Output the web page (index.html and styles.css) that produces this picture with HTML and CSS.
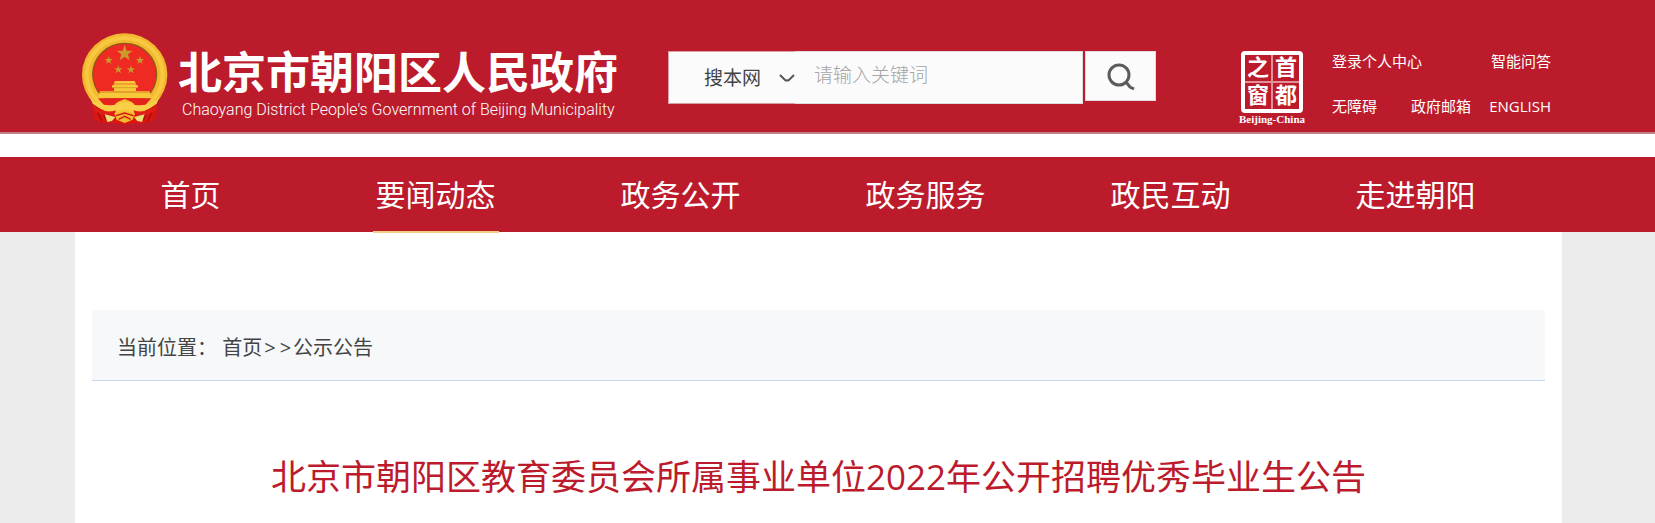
FILE: index.html
```
<!DOCTYPE html>
<html lang="zh-CN">
<head>
	<meta charset="UTF-8">
	<title>北京市朝阳区教育委员会所属事业单位2022年公开招聘优秀毕业生公告</title>
	<link rel="stylesheet" href="styles.css">
</head>
<body>
	<header class="header">
		<a class="logo" href="#">
			<svg class="emblem" viewBox="38 40 258 276" aria-hidden="true">
				<path d="M72 232 L70 292 Q82 310 110 309 L166 314 L222 310 Q250 312 262 290 L262 232 Z" fill="#d9160f"/>
				<path d="M80 256 Q84 282 98 304 M94 262 L110 300 M252 256 Q248 282 236 304 M238 262 L222 300" stroke="#9c0f14" stroke-width="4" fill="none"/>
				<ellipse cx="166" cy="165" rx="128" ry="124" fill="#f2b92e"/>
				<ellipse cx="166" cy="165" rx="114" ry="110" fill="none" stroke="#f8c840" stroke-width="12"/>
				<ellipse cx="166" cy="164" rx="98" ry="95" fill="#8c5a16"/>
				<ellipse cx="166" cy="165" rx="94" ry="92" fill="#ee2a22"/>
				<g fill="#c99a2c">
					<path d="M166 75 L172 93 L190 93 L176 104 L181 122 L166 111 L151 122 L156 104 L142 93 L160 93 Z"/>
					<path d="M118 109 L121 118 L130 118 L123 124 L126 133 L118 127 L110 133 L113 124 L106 118 L115 118 Z"/>
					<path d="M212 109 L215 118 L224 118 L217 124 L220 133 L212 127 L204 133 L207 124 L200 118 L209 118 Z"/>
					<path d="M147 137 L150 146 L159 146 L152 152 L155 161 L147 155 L139 161 L142 152 L135 146 L144 146 Z"/>
					<path d="M185 137 L188 146 L197 146 L190 152 L193 161 L185 155 L177 161 L180 152 L173 146 L182 146 Z"/>
				</g>
				<path d="M137 184 H196 L200 192 H133 Z M128 198 L135 194 H198 L206 198 V204 H128 Z M134 204 H200 V214 H134 Z M92 215 H241 L246 236 H86 Z" fill="#f6c83a"/>
				<path d="M128 204 H206 M90 218 H243" stroke="#c98a1c" stroke-width="2"/>
				<path d="M86 236 H246 L228 256 L205 268 H127 L104 256 Z" fill="#e3231b"/>
				<path d="M146 246 L166 238 L186 246 L196 254 H136 Z" fill="#f4bd32"/>
				<path d="M62 232 Q90 262 134 256 Q150 246 166 246 Q182 246 198 256 Q242 262 270 232 L262 252 Q232 276 200 274 L166 268 L132 274 Q100 276 70 252 Z" fill="#f9cf4a"/>
				<path d="M70 256 Q104 284 140 272 L134 286 Q98 292 72 270 Z M262 256 Q228 284 192 272 L198 286 Q234 292 260 270 Z" fill="#e01d16"/>
				<path d="M106 284 L138 292 L128 304 L114 307 Z M226 284 L194 292 L204 304 L218 307 Z" fill="#e9df72"/>
				<path d="M136 282 Q166 268 196 282 L190 300 L166 310 L142 300 Z" fill="#f3b92c"/>
				<path d="M140 288 L166 280 L192 288 M148 299 L166 290 L184 299" stroke="#d21912" stroke-width="4" fill="none"/>
			</svg>
			<span class="site-name">
				<strong>北京市朝阳区人民政府</strong>
				<span class="site-name-en">Chaoyang District People's Government of Beijing Municipality</span>
			</span>
		</a>

		<form class="search">
			<div class="scope">
				<select aria-label="搜索范围">
					<option>搜本网</option>
				</select>
				<svg class="arrow" viewBox="0 0 16 8" aria-hidden="true"><path d="M1 1 L6 6 Q8 7 10 6 L15 1" fill="none" stroke="#555" stroke-width="2"/></svg>
			</div>
			<input type="text" placeholder="请输入关键词" aria-label="关键词">
			<button type="submit" aria-label="搜索">
				<svg viewBox="0 0 28 28" aria-hidden="true"><circle cx="12" cy="12" r="10" fill="none" stroke="#5c5c5c" stroke-width="3"/><path d="M19 19 L23 24 L27 26" fill="none" stroke="#5c5c5c" stroke-width="3"/></svg>
			</button>
		</form>

		<div class="tools">
			<a class="seal" href="#">
				<span class="seal-box">
					<span>之</span><span>首</span>
					<span>窗</span><span>都</span>
				</span>
				<span class="seal-en">Beijing-China</span>
			</a>
			<div class="links">
				<div class="links-row">
					<a href="#">登录个人中心</a>
					<a href="#">智能问答</a>
				</div>
				<div class="links-row">
					<a href="#">无障碍</a>
					<a class="mail" href="#">政府邮箱</a>
					<a href="#">ENGLISH</a>
				</div>
			</div>
		</div>
	</header>

	<nav class="nav">
		<a href="#"><span>首页</span></a>
		<a class="active" href="#"><span>要闻动态</span></a>
		<a href="#"><span>政务公开</span></a>
		<a href="#"><span>政务服务</span></a>
		<a href="#"><span>政民互动</span></a>
		<a href="#"><span>走进朝阳</span></a>
	</nav>

	<main class="content">
		<div class="breadcrumb">
			当前位置：
			<a href="#">首页</a><span class="sep">&gt;</span><span class="sep">&gt;</span><a href="#">公示公告</a>
		</div>
		<h1>北京市朝阳区教育委员会所属事业单位2022年公开招聘优秀毕业生公告</h1>
	</main>
</body>
</html>
```
FILE: styles.css
```
* {
	box-sizing: border-box;
}

body {
	margin: 0;
	background-color: #ececec;
	font-family: "Open Sans", "Noto Sans CJK SC", sans-serif;
	color: #444;
}

a {
	color: inherit;
	text-decoration: none;
}

/* header */
.header {
	display: flex;
	align-items: flex-start;
	height: 134px;
	padding: 0 104px 0 82px;
	background-color: #bc1b2c;
	border-bottom: 2px solid #b9828a;
	color: #fff;
}

.logo {
	display: flex;
	gap: 10px;
	width: 586px;
	padding-top: 33px;
}

.emblem {
	width: 86px;
	height: 92px;
}

.site-name {
	display: flex;
	flex-direction: column;
	padding-top: 14px;
	white-space: nowrap;
}

.site-name strong {
	font-size: 44px;
	line-height: 50px;
}

.site-name-en {
	padding-left: 4px;
	font-family: Roboto, sans-serif;
	font-size: 16px;
	font-weight: 300;
	line-height: 26px;
}

.search {
	display: flex;
	align-items: flex-start;
	width: 488px;
	margin-top: 51px;
}

.scope {
	position: relative;
	width: 127px;
}

.scope select {
	width: 100%;
	height: 53px;
	padding: 0 0 0 35px;
	appearance: none;
	background-color: #fbfbfb;
	border: 1px solid #d8a0a6;
	border-right: none;
	border-radius: 0;
	font-family: inherit;
	font-size: 19px;
	color: #444;
}

.arrow {
	position: absolute;
	top: 23px;
	right: 0;
	width: 16px;
	height: 8px;
}

.search input {
	flex: 1;
	min-width: 0;
	height: 53px;
	padding: 0 19px 6px;
	background-color: #fbfbfb;
	border: 1px solid #ddd;
	border-left: none;
	font-family: inherit;
	font-size: 19px;
}

.search input::placeholder {
	color: #a4a4a4;
	font-weight: 300;
}

.search button {
	width: 71px;
	height: 50px;
	margin-left: 2px;
	padding: 4px 0 0;
	background-color: #fbfbfb;
	border: 1px solid #ddd;
}

.search button svg {
	width: 28px;
	height: 28px;
}

.tools {
	display: flex;
	gap: 26px;
	margin-left: auto;
	padding-top: 51px;
}

.seal {
	display: flex;
	flex-direction: column;
	align-items: center;
	width: 68px;
}

.seal-box {
	display: grid;
	grid-template-columns: 1fr 1fr;
	gap: 2px;
	width: 62px;
	height: 62px;
	border: 4px solid #fff;
	border-radius: 4px;
	background-color: #e0919a;
}

.seal-box span {
	background-color: #bc1b2c;
	font-family: "Liberation Serif", "Noto Sans CJK SC", serif;
	font-size: 22px;
	font-weight: bold;
	line-height: 26px;
	text-align: center;
}

.seal-en {
	font-family: "Liberation Serif", serif;
	font-size: 11px;
	font-weight: bold;
	line-height: 12px;
}

.links {
	display: flex;
	flex-direction: column;
	gap: 25px;
	width: 219px;
	font-size: 15px;
	line-height: 20px;
}

.links-row {
	display: flex;
	justify-content: space-between;
}

.mail {
	margin-left: 16px;
}

/* navigation */
.nav {
	display: grid;
	grid-template-columns: repeat(6, 1fr);
	padding: 0 117px 0 68px;
	border-top: 23px solid #fff;
	background-color: #bc1b2c;
	color: #fff;
	font-size: 30px;
	line-height: 76px;
	text-align: center;
}

.nav a {
	height: 75px;
}

.nav span {
	display: inline-block;
}

.nav .active span {
	height: 76px;
	padding: 0 3px;
	border-bottom: 2px solid #f5cd84;
}

/* article */
.content {
	min-height: 291px;
	margin: 0 93px 0 75px;
	padding: 78px 17px 0;
	background-color: #fff;
}

.breadcrumb {
	height: 71px;
	padding-left: 25px;
	background-color: #f6f8fa;
	border-bottom: 1px solid #c5d6ee;
	font-size: 20px;
	line-height: 76px;
}

.sep {
	padding: 0 2px;
}

h1 {
	margin: 66px 0 0;
	color: #bc1b2c;
	font-size: 35px;
	font-weight: normal;
	line-height: 60px;
	text-align: center;
}
```
